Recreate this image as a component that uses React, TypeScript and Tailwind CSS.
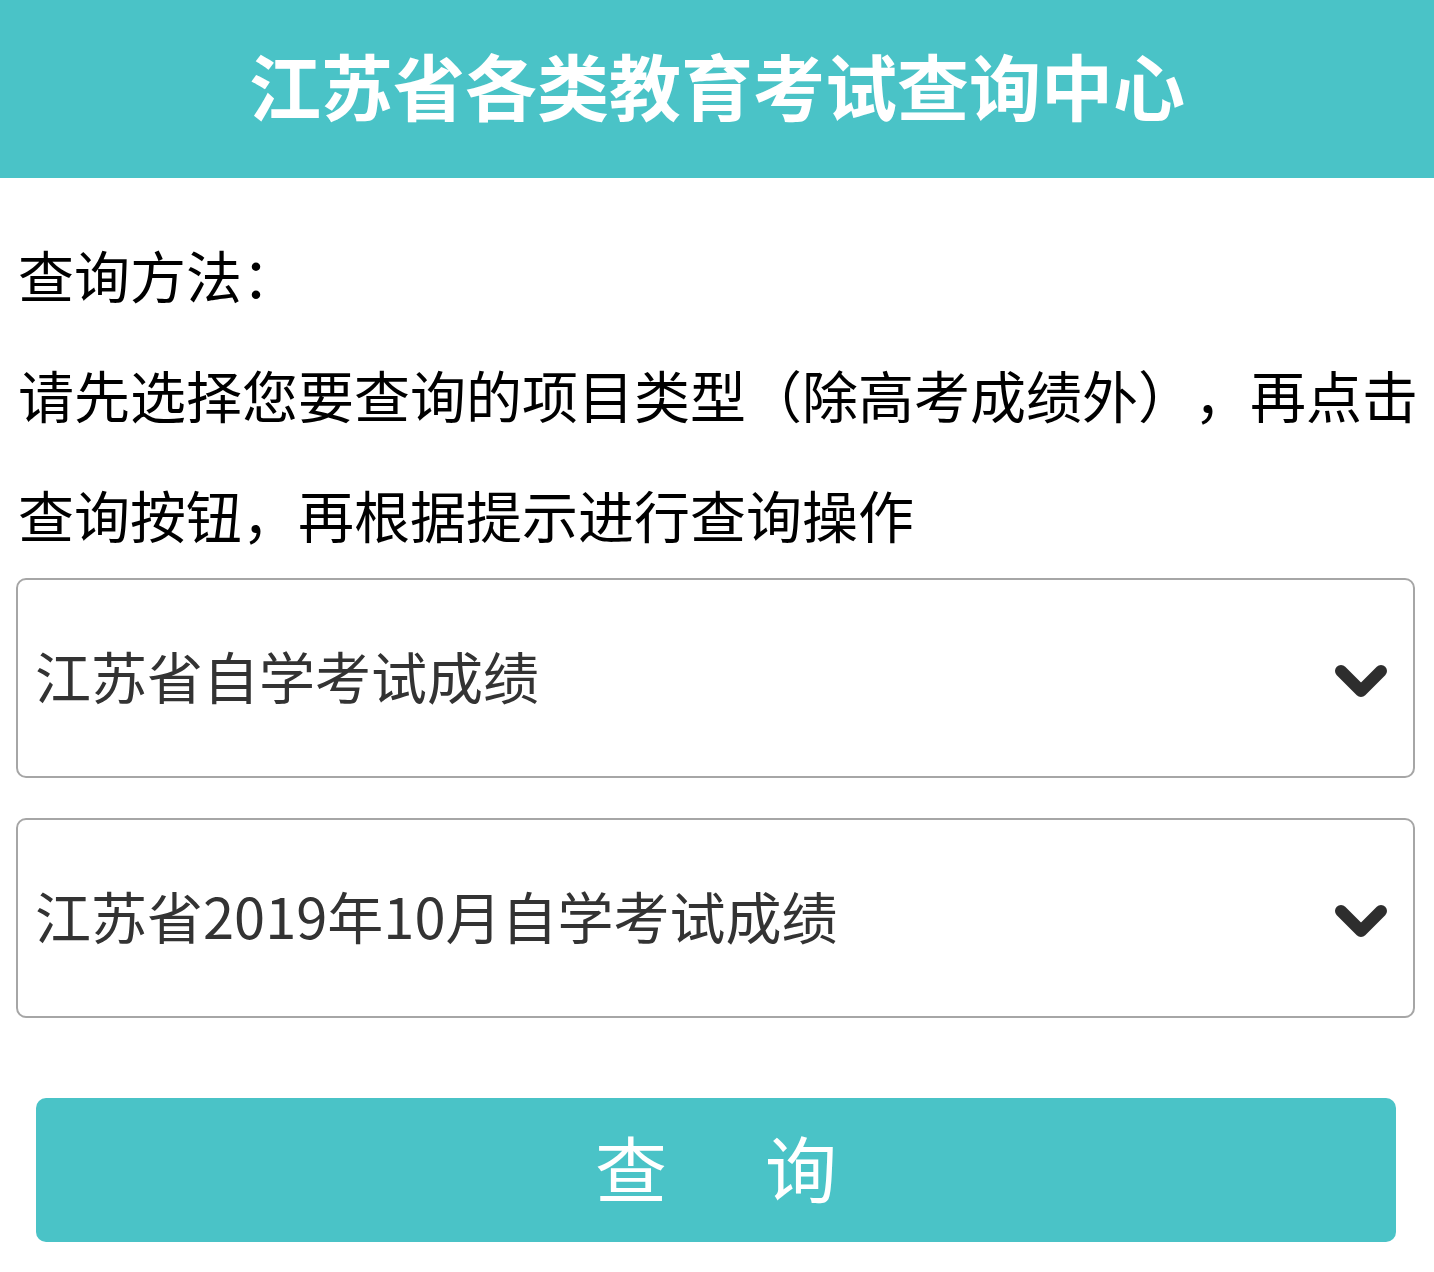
import React from "react";

const font = { fontFamily: '"Noto Sans CJK SC", "Noto Sans", sans-serif' };

function Chevron() {
  return (
    <svg width="60" height="44" viewBox="0 0 60 44" className="shrink-0 mt-[10px]">
      <polyline
        points="8,10 28,30 48,10"
        fill="none"
        stroke="#2e2e2e"
        strokeWidth="12"
        strokeLinecap="round"
        strokeLinejoin="round"
      />
    </svg>
  );
}

function SelectBox({ label }: { label: string }) {
  return (
    <div className="ml-[16px] w-[1399px] h-[200px] border-2 border-[#a6a6a6] rounded-[10px] flex items-center justify-between pl-[17px] pr-[20px]">
      <span className="text-[56px] leading-none text-[#333333] pb-[6px]">{label}</span>
      <Chevron />
    </div>
  );
}

export default function App() {
  return (
    <div className="w-[1434px] min-h-[1272px] bg-white" style={font}>
      <div className="h-[178px] bg-[#4ac3c7] flex items-center justify-center pb-[10px]">
        <h1 className="text-[72px] font-bold text-white leading-none">
          江苏省各类教育考试查询中心
        </h1>
      </div>
      <div className="mt-[36px] mb-[4px] pl-[18px] text-[56px] leading-[120px] text-black [text-spacing-trim:space-all]">
        <p>查询方法：</p>
        <p>请先选择您要查询的项目类型（除高考成绩外），再点击查询按钮，再根据提示进行查询操作</p>
      </div>
      <SelectBox label="江苏省自学考试成绩" />
      <div className="h-[40px]" />
      <SelectBox label="江苏省2019年10月自学考试成绩" />
      <button className="mt-[80px] ml-[36px] w-[1360px] h-[144px] bg-[#4ac3c7] rounded-[10px] flex items-center justify-center gap-[98px] text-white text-[72px] leading-none pb-[8px]">
        <span>查</span>
        <span>询</span>
      </button>
    </div>
  );
}
